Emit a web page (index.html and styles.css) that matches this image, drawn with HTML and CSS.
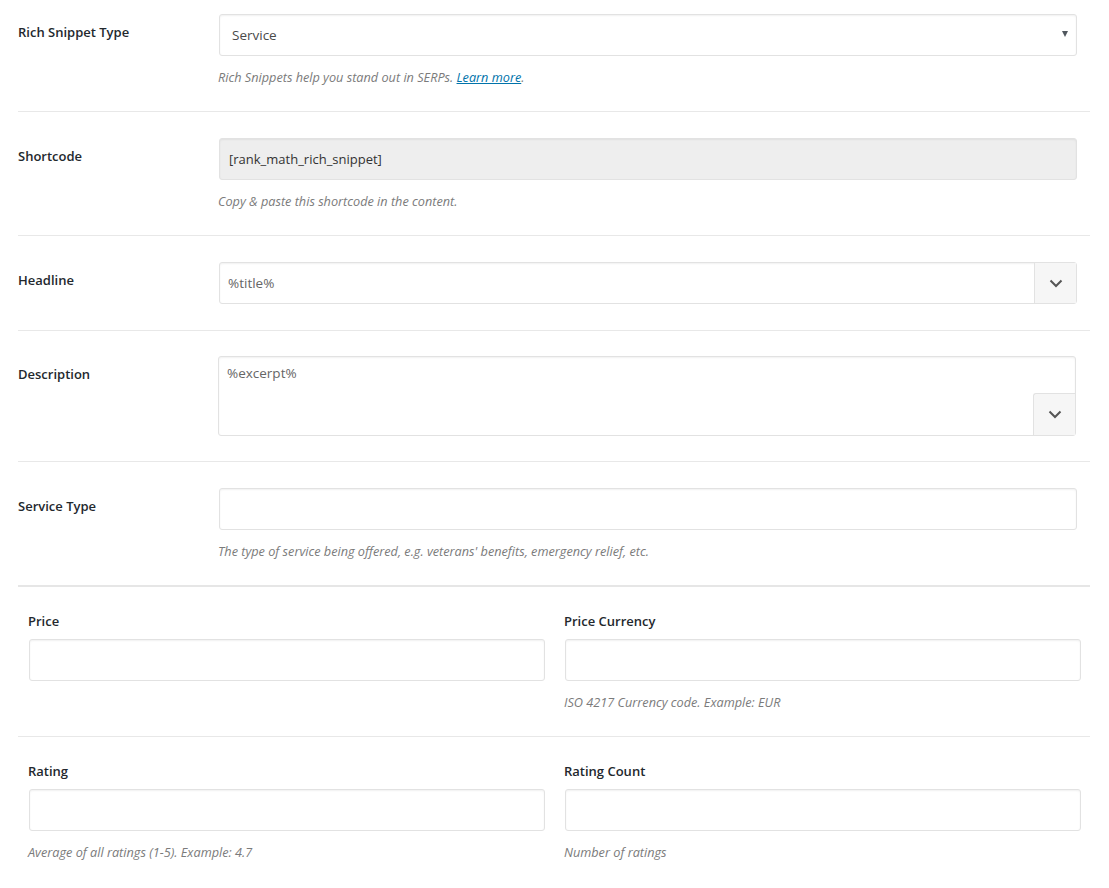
FILE: index.html
```html
<!DOCTYPE html>
<html>
<head>
<meta charset="utf-8">
<link rel="stylesheet" href="styles.css">
</head>
<body>
<div class="form">
  <div class="row first">
    <div class="label">Rich Snippet Type</div>
    <div class="field">
      <div class="select">
        <span>Service</span>
        <span class="tri"></span>
      </div>
      <p class="help">Rich Snippets help you stand out in SERPs. <a href="#">Learn more</a>.</p>
    </div>
  </div>

  <div class="row">
    <div class="label">Shortcode</div>
    <div class="field">
      <div class="input readonly">[rank_math_rich_snippet]</div>
      <p class="help">Copy &amp; paste this shortcode in the content.</p>
    </div>
  </div>

  <div class="row r-headline">
    <div class="label">Headline</div>
    <div class="field">
      <div class="input with-btn">
        <span class="val">%title%</span>
        <span class="btn"><svg width="14" height="9" viewBox="0 0 14 9"><path d="M1.5 1.5 L7 7 L12.5 1.5" fill="none" stroke="#555" stroke-width="2"/></svg></span>
      </div>
    </div>
  </div>

  <div class="row r-desc">
    <div class="label">Description</div>
    <div class="field">
      <div class="textarea">
        <span class="val">%excerpt%</span>
        <span class="btn tbtn"><svg width="14" height="9" viewBox="0 0 14 9"><path d="M1.5 1.5 L7 7 L12.5 1.5" fill="none" stroke="#555" stroke-width="2"/></svg></span>
      </div>
    </div>
  </div>

  <div class="row">
    <div class="label">Service Type</div>
    <div class="field">
      <div class="input"></div>
      <p class="help">The type of service being offered, e.g. veterans' benefits, emergency relief, etc.</p>
    </div>
  </div>

  <div class="row cols thick">
    <div class="col">
      <div class="clabel">Price</div>
      <div class="input"></div>
    </div>
    <div class="col">
      <div class="clabel">Price Currency</div>
      <div class="input"></div>
      <p class="help">ISO 4217 Currency code. Example: EUR</p>
    </div>
  </div>

  <div class="row cols last">
    <div class="col">
      <div class="clabel">Rating</div>
      <div class="input"></div>
      <p class="help">Average of all ratings (1-5). Example: 4.7</p>
    </div>
    <div class="col">
      <div class="clabel">Rating Count</div>
      <div class="input"></div>
      <p class="help">Number of ratings</p>
    </div>
  </div>
</div>
</body>
</html>
```
FILE: styles.css
```css
html, body {
  margin: 0;
  padding: 0;
  background: #fff;
}
body {
  font-family: "Open Sans", "Liberation Sans", sans-serif;
  font-size: 13px;
  color: #23282d;
}
.form {
  margin: 0 19px 0 18px;
}
.row {
  display: flex;
  padding: 26px 0 24px;
  border-top: 1px solid #e8e8e8;
}
.row.first {
  border-top: none;
  padding-top: 14px;
}
.row.thick {
  border-top: 2px solid #e6e6e6;
}
.label {
  width: 201px;
  flex: none;
  font-weight: 600;
  line-height: 20px;
  padding-top: 8px;
}
.field {
  width: 858px;
  flex: none;
}
.input, .select, .textarea {
  box-sizing: border-box;
  height: 42px;
  border: 1px solid #e2e2e2;
  border-radius: 3px;
  background: #fff;
  box-shadow: inset 0 1px 2px rgba(0,0,0,0.06);
  font-size: 13.5px;
  color: #4a4a4a;
  display: flex;
  align-items: center;
  padding: 0 12px;
}
.select {
  justify-content: space-between;
  padding: 0 8px 0 12px;
}
.tri {
  width: 0;
  height: 0;
  border-left: 3.5px solid transparent;
  border-right: 3.5px solid transparent;
  border-top: 6px solid #50575e;
  margin-top: -2px;
}
.readonly {
  background: #eeeeee;
  padding-left: 9px;
  color: #333;
  font-size: 13px;
}
.with-btn {
  padding: 0 0 0 8px;
  color: #666;
}
.with-btn .val {
  flex: 1;
}
.btn {
  width: 42px;
  height: 40px;
  flex: none;
  box-sizing: border-box;
  background: #f6f6f6;
  border-left: 1px solid #e2e2e2;
  display: flex;
  align-items: center;
  justify-content: center;
}
.textarea {
  height: 80px;
  width: 858px;
  margin-left: -1px;
  position: relative;
  align-items: flex-start;
  padding: 7px 8px;
  color: #666;
}
.tbtn {
  position: absolute;
  right: 0;
  bottom: 0;
  border-top: 1px solid #e2e2e2;
  border-top-left-radius: 3px;
  height: 42px;
}
.r-headline {
  padding-bottom: 26px;
}
.r-desc {
  padding-top: 25px;
  padding-bottom: 25px;
}
.help {
  margin: 11px 0 0 -1px;
  font-size: 12.7px;
  line-height: 20px;
  font-style: italic;
  color: #7b7b7b;
}
.help a {
  color: #0073aa;
}
.cols {
  padding: 24px 9px 24px 10px;
  gap: 19px;
}
.col {
  flex: 1;
}
.col .input {
  margin-left: 1px;
}
.col .help {
  margin-left: 0;
}
.clabel {
  font-weight: 600;
  line-height: 20px;
  margin-bottom: 8px;
}
.last {
  padding-bottom: 40px;
}
```
